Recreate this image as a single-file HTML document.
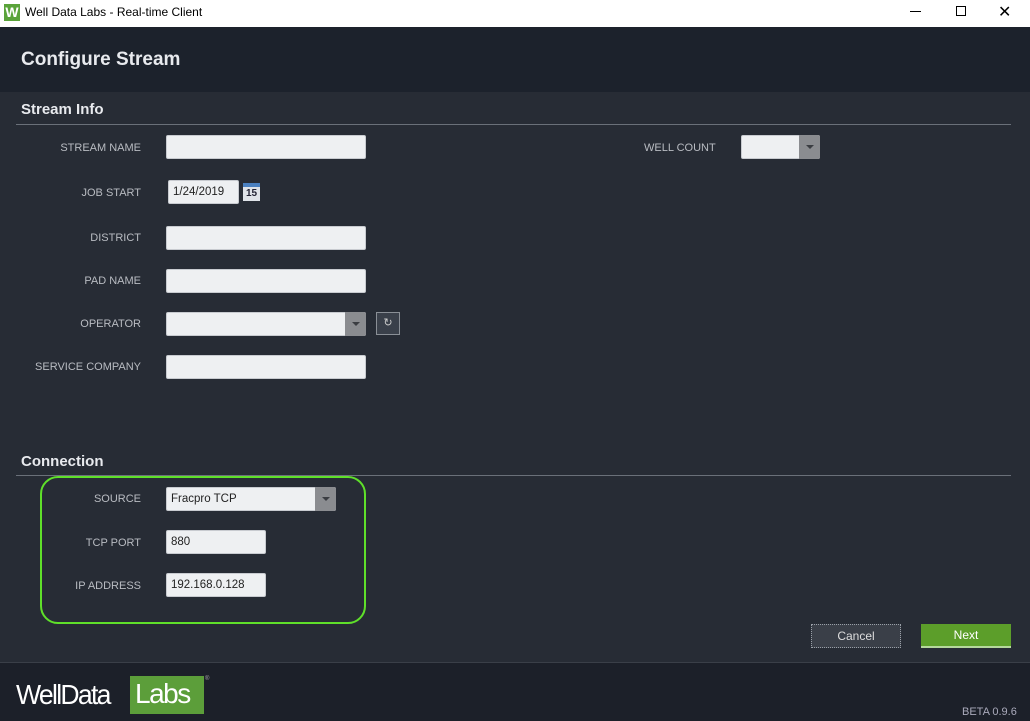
<!DOCTYPE html>
<html><head><meta charset="utf-8"><style>
*{margin:0;padding:0;box-sizing:border-box}
body{width:1030px;height:721px;overflow:hidden;background:#272c35;font-family:"Liberation Sans",sans-serif;position:relative}
.a{position:absolute}
.lbl{position:absolute;color:#b9bcc2;font-size:11px;text-align:right;width:141px;left:0}
.inp{position:absolute;background:#eef0f2;border:1px solid #c8cbd0;border-radius:2px;height:24px;font-size:11.5px;color:#222;padding:5px 4px}
.sec{position:absolute;left:21px;color:#e8eaee;font-weight:bold;font-size:15px}
.line{position:absolute;left:16px;right:19px;height:1px;background:#6a7079}
.dd{position:absolute;background:#8a8c90;width:21px;height:24px;border-radius:0 2px 2px 0}
.dd:after{content:"";position:absolute;left:7px;top:10px;border:4px solid transparent;border-top:4px solid #3a3d42}
</style></head><body>
<div class="a" style="left:0;top:0;width:1030px;height:27px;background:#fff"></div>
<div class="a" style="left:4px;top:4px;width:16px;height:17px;background:#5aa33a;color:#fff;font-weight:bold;font-size:14px;text-align:center;line-height:17px">W</div>
<div class="a" style="left:25px;top:5px;font-size:12px;color:#000">Well Data Labs - Real-time Client</div>
<div class="a" style="left:910px;top:11px;width:11px;height:1px;background:#000"></div>
<div class="a" style="left:956px;top:6px;width:10px;height:10px;border:1px solid #000"></div>
<div class="a" style="left:998px;top:2px;font-size:16px;color:#000">✕</div>
<div class="a" style="left:0;top:27px;width:1030px;height:65px;background:#1c222c"></div>
<div class="a" style="left:21px;top:49px;color:#e8eaee;font-weight:bold;font-size:19px">Configure Stream</div>
<div class="sec" style="top:101px">Stream Info</div>
<div class="line" style="top:124px"></div>
<div class="lbl" style="top:142px">STREAM NAME</div><div class="inp" style="left:166px;top:135px;width:200px"></div>
<div class="a" style="left:644px;top:142px;color:#b9bcc2;font-size:11px">WELL COUNT</div>
<div class="inp" style="left:741px;top:135px;width:79px"></div><div class="dd" style="left:799px;top:135px"></div>
<div class="lbl" style="top:187px">JOB START</div><div class="inp" style="left:168px;top:180px;width:71px">1/24/2019</div>
<div class="a" style="left:243px;top:183px;width:17px;height:18px;background:#dfe3e8;border-top:4px solid #4a80c0;font-size:10px;font-weight:bold;color:#223;text-align:center;line-height:14px">15</div>
<div class="lbl" style="top:232px">DISTRICT</div><div class="inp" style="left:166px;top:226px;width:200px"></div>
<div class="lbl" style="top:275px">PAD NAME</div><div class="inp" style="left:166px;top:269px;width:200px"></div>
<div class="lbl" style="top:318px">OPERATOR</div><div class="inp" style="left:166px;top:312px;width:200px"></div><div class="dd" style="left:345px;top:312px"></div>
<div class="a" style="left:376px;top:312px;width:24px;height:23px;border:1px solid #8a8f96;background:#3a404a;color:#ccc;font-size:11px;text-align:center;line-height:21px">↻</div>
<div class="lbl" style="top:361px">SERVICE COMPANY</div><div class="inp" style="left:166px;top:355px;width:200px"></div>
<div class="sec" style="top:453px">Connection</div>
<div class="line" style="top:475px"></div>
<div class="a" style="left:40px;top:476px;width:326px;height:148px;border:2px solid #5fe02a;border-radius:18px"></div>
<div class="lbl" style="top:493px">SOURCE</div><div class="inp" style="left:166px;top:487px;width:170px">Fracpro TCP</div><div class="dd" style="left:315px;top:487px"></div>
<div class="lbl" style="top:537px">TCP PORT</div><div class="inp" style="left:166px;top:530px;width:100px">880</div>
<div class="lbl" style="top:580px">IP ADDRESS</div><div class="inp" style="left:166px;top:573px;width:100px">192.168.0.128</div>
<div class="a" style="left:811px;top:624px;width:90px;height:24px;border:1px dotted #9aa0a8;background:#3a3f48;color:#ddd;font-size:12px;text-align:center;line-height:22px">Cancel</div>
<div class="a" style="left:921px;top:624px;width:90px;height:24px;background:#5c9e2a;border-bottom:2px solid #b5d89c;color:#fff;font-size:12px;text-align:center;line-height:22px">Next</div>
<div class="a" style="left:0;top:662px;width:1030px;height:59px;background:#1c2029;border-top:1px solid #3a3f48"></div>
<div class="a" style="left:16px;top:679px;color:#fff;font-size:28px;letter-spacing:-1.8px;transform:scaleX(0.95);transform-origin:left">WellData</div>
<div class="a" style="left:130px;top:676px;width:74px;height:38px;background:#5c9e3a;color:#fff;font-size:28px;letter-spacing:-1.5px;padding-left:5px;line-height:36px">Labs</div>
<div class="a" style="left:205px;top:676px;color:#aaa;font-size:6px">®</div>
<div class="a" style="left:962px;top:706px;color:#aab;font-size:11px">BETA 0.9.6</div>
</body></html>
